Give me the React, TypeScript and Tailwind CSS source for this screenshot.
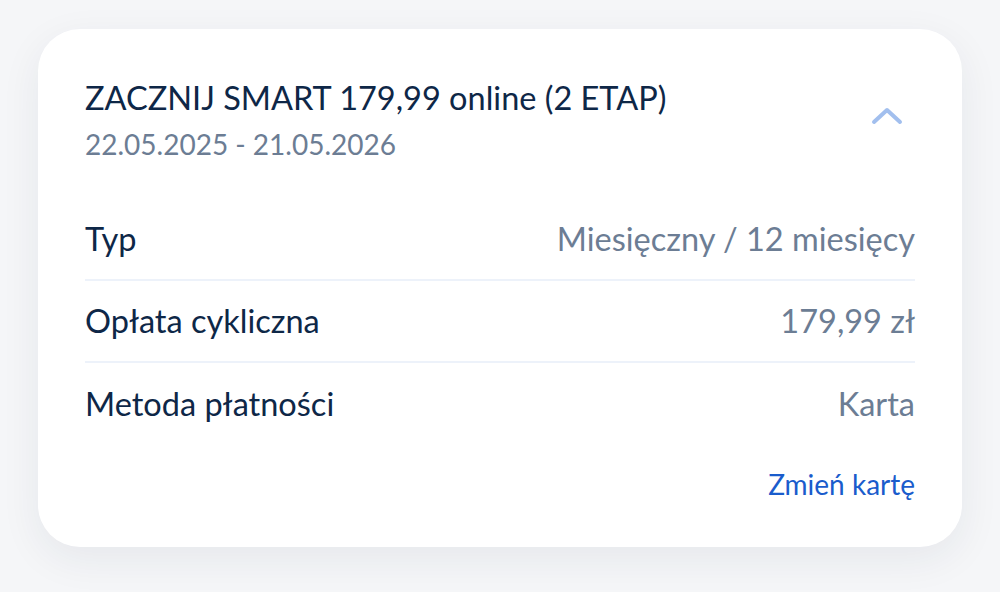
export default function App() {
  const rows = [
    { label: 'Typ', value: 'Miesięczny / 12 miesięcy' },
    { label: 'Opłata cykliczna', value: '179,99 zł' },
    { label: 'Metoda płatności', value: 'Karta' },
  ];

  return (
    <div
      className="w-[1000px] h-[592px] bg-[#f5f6f8] pt-[29px] px-[38px] overflow-hidden"
      style={{ fontFamily: 'Lato, "Open Sans", sans-serif' }}
    >
      <div className="bg-white rounded-[42px] h-[518px] px-[47px] pt-[49px] shadow-[0_12px_40px_rgba(30,45,70,0.07)]">
        <div className="flex items-start justify-between">
          <div>
            <h2 className="text-[32.5px] leading-[40px] text-[#0e2747]">ZACZNIJ SMART 179,99 online (2 ETAP)</h2>
            <p className="text-[28px] leading-[34px] mt-[9px] text-[#6c7d94]">22.05.2025 - 21.05.2026</p>
          </div>
          <svg width="32" height="18" viewBox="0 0 32 18" className="mt-[29px] mr-[12px]" fill="none">
            <polyline points="3,15 16,3 29,15" stroke="#a2bfee" strokeWidth="4" strokeLinecap="round" strokeLinejoin="round" />
          </svg>
        </div>

        <div className="mt-[38px]">
          {rows.map((row, i) => (
            <div
              key={row.label}
              className={
                'flex items-center justify-between h-[82px] text-[32.5px] ' +
                (i < rows.length - 1 ? 'border-b-2 border-[#edf2fa]' : '')
              }
            >
              <span className="text-[#0e2747]">{row.label}</span>
              <span className="text-[#6c7d94]">{row.value}</span>
            </div>
          ))}
        </div>

        <div className="flex justify-end mt-[18px]">
          <a className="text-[28px] text-[#1a5ccc]">Zmień kartę</a>
        </div>
      </div>
    </div>
  );
}
